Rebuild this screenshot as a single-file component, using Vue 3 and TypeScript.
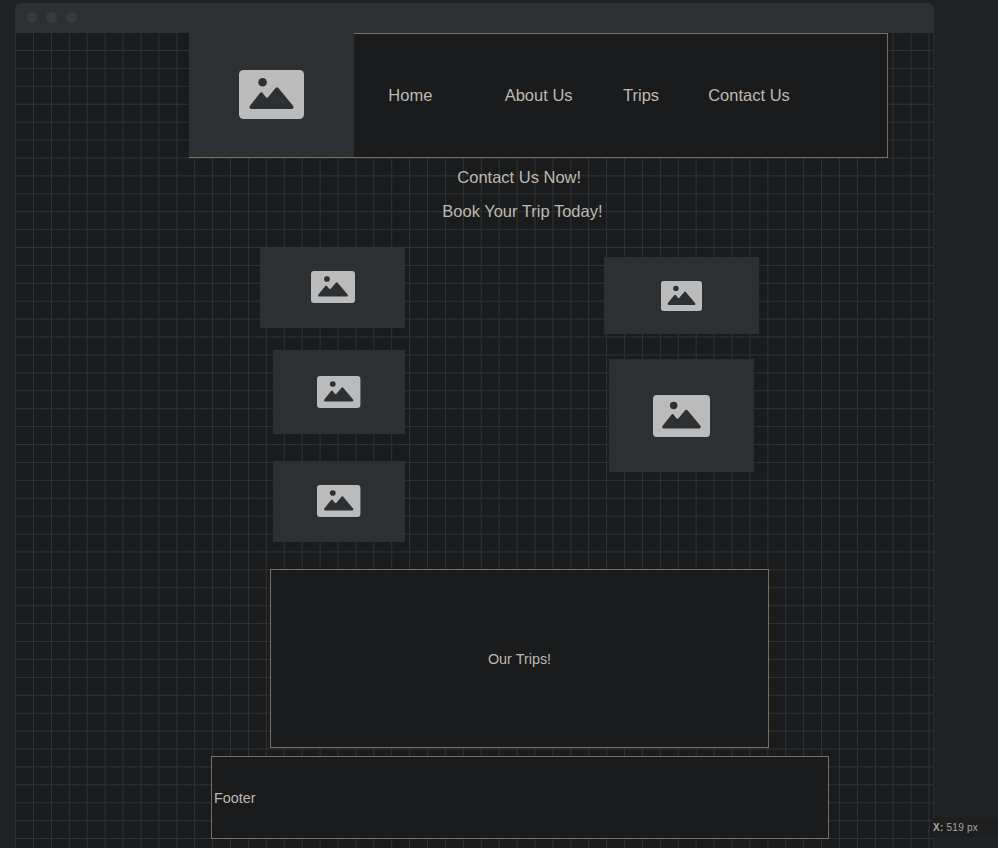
<script setup lang="ts">
interface Box { x: number; y: number; w: number; h: number }
interface ImageNode extends Box { id: string; iconW: number; iconH: number; raised?: boolean }
interface Label { text: string; x: number; y: number; w: number }

const STEP = 17.91
const columns = Array.from({ length: 51 }, (_, i) => 18 + i * STEP)
const rows = Array.from({ length: 46 }, (_, i) => 17 + i * STEP)

const images: ImageNode[] = [
  { id: 'logo', x: 174, y: 0, w: 165, h: 124, iconW: 65, iconH: 49, raised: true },
  { id: 'left-1', x: 245, y: 215, w: 145, h: 80, iconW: 44, iconH: 32, raised: true },
  { id: 'left-2', x: 258, y: 317, w: 132, h: 84, iconW: 43.4, iconH: 32 },
  { id: 'left-3', x: 258, y: 428, w: 132, h: 81, iconW: 43.4, iconH: 32, raised: true },
  { id: 'right-1', x: 589, y: 224, w: 155, h: 77, iconW: 41, iconH: 30 },
  { id: 'right-2', x: 594, y: 326, w: 145, h: 113, iconW: 57, iconH: 42 },
]

const labels: Label[] = [
  { text: 'Home', x: 373.3, y: 52, w: 44 },
  { text: 'About Us', x: 489.7, y: 52, w: 69 },
  { text: 'Trips', x: 608, y: 52, w: 37 },
  { text: 'Contact Us', x: 693.2, y: 52, w: 82 },
  { text: 'Contact Us Now!', x: 442.3, y: 134, w: 124 },
  { text: 'Book Your Trip Today!', x: 427.3, y: 168, w: 161 },
]

const place = (b: Box) => ({ left: `${b.x}px`, top: `${b.y}px`, width: `${b.w}px`, height: `${b.h}px` })
</script>

<template>
  <main class="workspace">
    <section class="browser">
      <header class="titlebar">
        <i class="dot"></i><i class="dot"></i><i class="dot"></i>
      </header>
      <div class="canvas">
        <svg class="grid" width="919" height="815" aria-hidden="true">
          <rect v-for="(x, i) in columns" :key="'c' + i" :x="x" y="0" width="1" height="815" />
          <rect v-for="(y, i) in rows" :key="'r' + i" x="0" :y="y" width="919" height="1" />
        </svg>
        <nav class="panel nav-panel"></nav>
        <div class="panel trips-panel">Our Trips!</div>
        <footer class="panel footer-panel">Footer</footer>
        <div
          v-for="n in images"
          :key="n.id"
          class="image-node"
          :class="{ raised: n.raised }"
          :style="place(n)"
        >
          <svg :width="n.iconW" :height="n.iconH" viewBox="0 0 65 49" preserveAspectRatio="none">
            <rect class="card" width="65" height="49" rx="4.5" />
            <circle class="cut" cx="23.6" cy="12.2" r="4.3" />
            <path class="cut" d="M11 35.8 L20.8 23.2 Q22.3 21.4 23.8 23.2 L26.4 26.8 Q27.9 28.6 29.4 26.8 L36.4 18.2 Q38 16.2 39.6 18.2 L54 35.8 Q55.6 39.1 52 39.1 H13 Q9.4 39.1 11 35.8 Z" />
          </svg>
        </div>
        <span
          v-for="l in labels"
          :key="l.text"
          class="label"
          :style="{ left: `${l.x}px`, top: `${l.y}px`, width: `${l.w}px` }"
        >{{ l.text }}</span>
      </div>
    </section>
    <div class="coords"><b>X:</b> 519 px</div>
  </main>
</template>

<style>
body { background: #202123; }
</style>

<style scoped>
.workspace {
  position: relative;
  box-sizing: border-box;
  width: 998px;
  height: 848px;
  padding: 3px 0 0 15px;
  overflow: hidden;
  background: #202123;
  color: #beb9b0;
  font-family: "Liberation Sans", Arial, sans-serif;
}
.browser {
  width: 919px;
  height: 845px;
  border-radius: 6px 6px 0 0;
  overflow: hidden;
}
.titlebar {
  box-sizing: border-box;
  display: flex;
  align-items: center;
  gap: 9px;
  height: 30px;
  padding: 0 0 1px 11.5px;
  background: #2c3033;
}
.dot {
  width: 10.7px;
  height: 11px;
  border-radius: 50%;
  background: #373b3e;
}
.canvas {
  position: relative;
  box-sizing: border-box;
  height: 815px;
  background: #1a1b1c;
}
.canvas::after {
  content: "";
  position: absolute;
  inset: 0;
  border: solid #2c3032;
  border-width: 0 1px;
}
.grid {
  display: block;
  fill: #303436;
}
.panel {
  position: absolute;
  box-sizing: border-box;
  display: flex;
  align-items: center;
  border: 1px solid #7b7060;
  background: #1a1b1c;
  font-size: 14.4px;
}
.nav-panel { left: 174px; top: 0; width: 699px; height: 125px; }
.trips-panel { left: 255px; top: 536px; width: 499px; height: 179px; justify-content: center; }
.footer-panel { left: 196px; top: 723px; width: 618px; height: 83px; padding-left: 2px; }
.image-node {
  position: absolute;
  box-sizing: border-box;
  display: flex;
  align-items: center;
  justify-content: center;
  background: #2c3033;
}
.image-node.raised { padding-bottom: 1.4px; }
.image-node svg { display: block; }
.card { fill: #bbbbbb; }
.cut { fill: #2c3033; }
.label {
  position: absolute;
  font-size: 16.5px;
  line-height: 20px;
  white-space: nowrap;
}
.coords {
  position: absolute;
  left: 933px;
  top: 818px;
  width: 65px;
  height: 19px;
  background: #1d1e1f;
  color: #aaa59c;
  font-size: 10px;
  line-height: 19px;
  letter-spacing: 0.25px;
  white-space: nowrap;
}
</style>
